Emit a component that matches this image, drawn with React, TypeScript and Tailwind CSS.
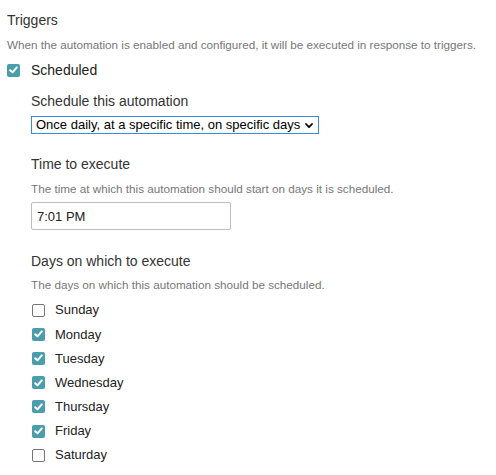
import { useState } from 'react';

const DAYS = [
  { name: 'Sunday', on: false },
  { name: 'Monday', on: true },
  { name: 'Tuesday', on: true },
  { name: 'Wednesday', on: true },
  { name: 'Thursday', on: true },
  { name: 'Friday', on: true },
  { name: 'Saturday', on: false },
];

function Box({ checked }: { checked: boolean }) {
  if (checked) {
    return (
      <span className="w-[13px] h-[13px] rounded-[2px] bg-[#4a9dac] flex items-center justify-center shrink-0">
        <svg width="9" height="8" viewBox="0 0 9 8" fill="none">
          <path d="M1.2 4.2 L3.5 6.4 L7.8 1.4" stroke="white" strokeWidth="2" strokeLinecap="round" strokeLinejoin="round" />
        </svg>
      </span>
    );
  }
  return <span className="w-[13px] h-[13px] rounded-[2px] border border-[#767676] bg-white shrink-0" />;
}

export default function App() {
  const [days, setDays] = useState(DAYS);

  return (
    <div className="w-[496px] h-[475px] bg-white pl-[7px] pt-[10px] font-['Liberation_Sans',Arial,sans-serif] overflow-hidden">
      {/* Section header */}
      <div className="text-[14px] leading-[20px] text-[#333]">Triggers</div>
      <div className="mt-[7px] text-[11.7px] leading-[16px] text-[#777]">
        When the automation is enabled and configured, it will be executed in response to triggers.
      </div>

      <div className="mt-[7px] h-[20px] flex items-center gap-[11px]">
        <Box checked />
        <span className="text-[14px] text-[#222]">Scheduled</span>
      </div>

      <div className="pl-[24px]">
        <div className="mt-[11px] text-[14px] leading-[20px] text-[#333]">Schedule this automation</div>
        <div className="mt-[5px] relative w-[288px] h-[18px]">
          <select
            defaultValue="daily"
            className="block appearance-none w-[288px] h-[18px] border border-[#3b8ad8] bg-white pl-[4px] text-[13px] leading-[16px] text-black outline-none"
          >
            <option value="daily">Once daily, at a specific time, on specific days</option>
          </select>
          <svg className="absolute right-[6px] top-[7px] pointer-events-none" width="8" height="6" viewBox="0 0 8 6" fill="none">
            <path d="M1 1 L4 4.2 L7 1" stroke="black" strokeWidth="1.8" strokeLinecap="round" strokeLinejoin="round" />
          </svg>
        </div>

        <div className="mt-[20px] text-[14px] leading-[20px] text-[#333]">Time to execute</div>
        <div className="mt-[7px] text-[11.7px] leading-[16px] text-[#777]">
          The time at which this automation should start on days it is scheduled.
        </div>
        <input
          readOnly
          value="7:01 PM"
          className="mt-[5px] block w-[200px] h-[28px] border border-[#bdbdbd] rounded-[2px] px-[5px] text-[13px] text-[#222] outline-none"
        />

        <div className="mt-[21px] text-[14px] leading-[20px] text-[#333]">Days on which to execute</div>
        <div className="mt-[6px] text-[11.7px] leading-[16px] text-[#777]">
          The days on which this automation should be scheduled.
        </div>

        <div className="mt-[5px] flex flex-col pl-[1px]">
          {days.map((d, i) => (
            <div
              key={d.name}
              onClick={() => setDays(days.map((x, j) => (j === i ? { ...x, on: !x.on } : x)))}
              className="h-[24.2px] flex items-center gap-[10px] cursor-pointer"
            >
              <Box checked={d.on} />
              <span className="text-[13px] text-[#222]">{d.name}</span>
            </div>
          ))}
        </div>
      </div>
    </div>
  );
}
